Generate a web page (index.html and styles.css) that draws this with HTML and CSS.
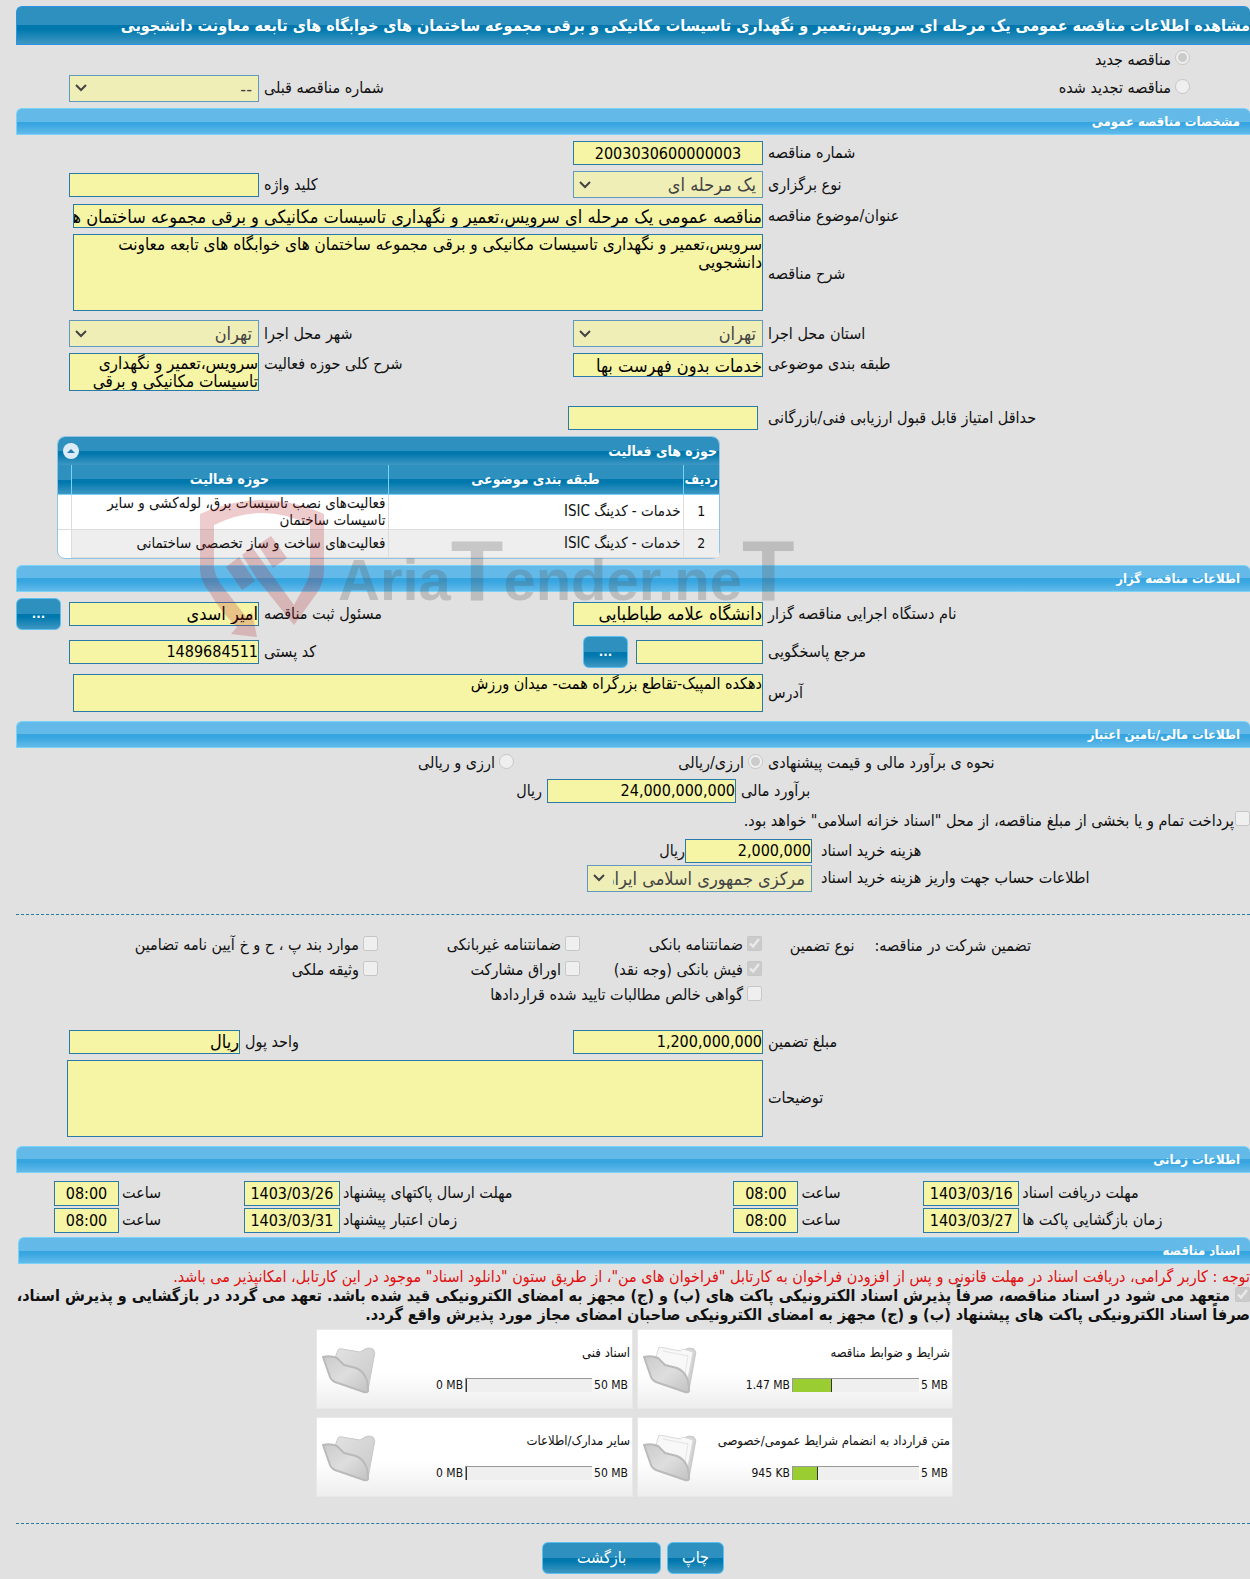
FILE: index.html
```html
<!DOCTYPE html>
<html lang="fa" dir="rtl">
<head>
  <meta charset="UTF-8" />
  <meta name="viewport" content="width=device-width, initial-scale=1">
  <title>مشاهده اطلاعات مناقصه عمومی</title>
  <link rel="stylesheet" href="styles.css">
</head>
<body>
  <h1 class="page-title">مشاهده اطلاعات مناقصه عمومی یک مرحله ای سرویس،تعمیر و نگهداری تاسیسات مکانیکی و برقی مجموعه ساختمان های خوابگاه های تابعه معاونت دانشجویی</h1>

  <div class="tender-kind">
    <div class="row">
      <label class="check"><input type="radio" name="kind" checked disabled>مناقصه جدید</label>
    </div>
    <div class="row">
      <label class="check"><input type="radio" name="kind" disabled>مناقصه تجدید شده</label>
      <label class="second" for="prev">شماره مناقصه قبلی</label>
      <select id="prev" disabled><option>--</option></select>
    </div>
  </div>

  <h2>مشخصات مناقصه عمومی</h2>
  <section class="form">
    <div class="row">
      <label for="number">شماره مناقصه</label>
      <input class="center" type="text" id="number" value="2003030600000003" readonly>
    </div>
    <div class="row">
      <label for="type">نوع برگزاری</label>
      <select id="type" disabled><option>یک مرحله ای</option></select>
      <label for="keyword">کلید واژه</label>
      <input type="text" id="keyword" readonly>
    </div>
    <div class="row">
      <label for="subject">عنوان/موضوع مناقصه</label>
      <input class="wide words" type="text" id="subject" value="مناقصه عمومی یک مرحله ای سرویس،تعمیر و نگهداری تاسیسات مکانیکی و برقی مجموعه ساختمان های خوابگاه های تابعه معاونت دانشجویی" readonly>
    </div>
    <div class="row">
      <label for="desc">شرح مناقصه</label>
      <textarea class="wide tall" id="desc" readonly>سرویس،تعمیر و نگهداری تاسیسات مکانیکی و برقی مجموعه ساختمان های خوابگاه های تابعه معاونت دانشجویی</textarea>
    </div>
    <div class="row">
      <label for="province">استان محل اجرا</label>
      <select id="province" disabled><option>تهران</option></select>
      <label for="city">شهر محل اجرا</label>
      <select id="city" disabled><option>تهران</option></select>
    </div>
    <div class="row top">
      <label for="category">طبقه بندی موضوعی</label>
      <input class="words" type="text" id="category" value="خدمات بدون فهرست بها" readonly>
      <label for="scope">شرح کلی حوزه فعالیت</label>
      <textarea id="scope" readonly>سرویس،تعمیر و نگهداری تاسیسات مکانیکی و برقی</textarea>
    </div>
    <div class="row score">
      <label for="score">حداقل امتیاز قابل قبول ارزیابی فنی/بازرگانی</label>
      <input type="text" id="score" readonly>
    </div>

    <div class="grid-box">
      <div class="grid-caption">
        <span>حوزه های فعالیت</span>
        <button type="button" class="toggle" aria-label="بستن">
          <svg viewBox="0 0 16 16" width="16" height="16"><circle cx="8" cy="8" r="8" fill="#dcebf8"/><path d="M4 10l4-4 4 4z" fill="#217bb0"/></svg>
        </button>
      </div>
      <table>
        <thead>
          <tr>
            <th class="col-num">ردیف</th>
            <th class="col-cat">طبقه بندی موضوعی</th>
            <th class="col-act">حوزه فعالیت</th>
            <th class="col-end"></th>
          </tr>
        </thead>
        <tbody>
          <tr>
            <td class="col-num">1</td>
            <td>خدمات - کدینگ ISIC</td>
            <td>فعالیت‌های نصب تاسیسات برق، لوله‌کشی و سایر تاسیسات ساختمان</td>
            <td class="col-end"></td>
          </tr>
          <tr>
            <td class="col-num">2</td>
            <td>خدمات - کدینگ ISIC</td>
            <td>فعالیت‌های ساخت و ساز تخصصی ساختمانی</td>
            <td class="col-end"></td>
          </tr>
        </tbody>
      </table>
      <svg class="watermark" viewBox="0 0 610 144" width="610" height="144" aria-hidden="true">
        <g fill="#b41c22" opacity=".22">
          <path d="M0 13Q62-15 124 13V69Q124 82 117 92L94 124 57 78 42 54 52 46 70 71 94 104 105 84Q110 76 110 66V24Q62 0 14 24V66Q15 76 23 86L47 117 52 111 57 136 31 133 37 126Q20 110 10 92Q0 80 0 69Z"/>
          <path d="M58 44L71 35 87 57 73 67Z"/>
          <path d="M26 66L39 56 55 80 42 89Z"/>
        </g>
        <text class="brand" x="138" y="99">Aria<tspan class="brand-cap">T</tspan>ender.ne<tspan class="brand-cap">T</tspan></text>
      </svg>
    </div>
  </section>

  <h2>اطلاعات مناقصه گزار</h2>
  <section class="form">
    <div class="row agency">
      <label for="agency">نام دستگاه اجرایی مناقصه گزار</label>
      <input class="words" type="text" id="agency" value="دانشگاه علامه طباطبایی" readonly>
      <label for="officer">مسئول ثبت مناقصه</label>
      <input class="words" type="text" id="officer" value="امیر اسدی" readonly>
      <button type="button" class="btn more">...</button>
    </div>
    <div class="row agency">
      <label for="contact">مرجع پاسخگویی</label>
      <div class="pick">
        <input type="text" id="contact" readonly>
        <button type="button" class="btn more">...</button>
      </div>
      <label for="postal">کد پستی</label>
      <input type="text" id="postal" value="1489684511" readonly>
    </div>
    <div class="row">
      <label for="address">آدرس</label>
      <textarea class="wide" id="address" readonly>دهکده المپیک-تقاطع بزرگراه همت- میدان ورزش</textarea>
    </div>
  </section>

  <h2 class="spaced">اطلاعات مالی/تامین اعتبار</h2>
  <section class="form">
    <div class="row">
      <span class="label">نحوه ی برآورد مالی و قیمت پیشنهادی</span>
      <label class="check"><input type="radio" name="currency" checked disabled>ارزی/ریالی</label>
      <label class="check currency-two"><input type="radio" name="currency" disabled>ارزی و ریالی</label>
    </div>
    <div class="line estimate">
      <label for="estimate">برآورد مالی</label>
      <input type="text" id="estimate" value="24,000,000,000" readonly>
      <span>ریال</span>
    </div>
    <div class="line treasury">
      <label class="check"><input type="checkbox" disabled>پرداخت تمام و یا بخشی از مبلغ مناقصه، از محل "اسناد خزانه اسلامی" خواهد بود.</label>
    </div>
    <div class="costs">
      <label for="cost">هزینه خرید اسناد</label>
      <div class="line">
        <input type="text" id="cost" value="2,000,000" readonly>
        <span>ریال</span>
      </div>
      <label for="account">اطلاعات حساب جهت واریز هزینه خرید اسناد</label>
      <select id="account" disabled><option>مرکزی جمهوری اسلامی ایران</option></select>
    </div>
    <hr>
    <div class="guarantee">
      <div class="guarantee-title">
        <span>تضمین شرکت در مناقصه:</span>
        <span>نوع تضمین</span>
      </div>
      <div class="guarantee-types">
        <label class="check"><input type="checkbox" checked disabled>ضمانتنامه بانکی</label>
        <label class="check"><input type="checkbox" disabled>ضمانتنامه غیربانکی</label>
        <label class="check"><input type="checkbox" disabled>موارد بند پ ، ح و خ آیین نامه تضامین</label>
        <label class="check"><input type="checkbox" checked disabled>فیش بانکی (وجه نقد)</label>
        <label class="check"><input type="checkbox" disabled>اوراق مشارکت</label>
        <label class="check"><input type="checkbox" disabled>وثیقه ملکی</label>
        <label class="check all"><input type="checkbox" disabled>گواهی خالص مطالبات تایید شده قراردادها</label>
      </div>
    </div>
    <div class="row">
      <label for="amount">مبلغ تضمین</label>
      <input type="text" id="amount" value="1,200,000,000" readonly>
      <div class="unit">
        <label for="unit">واحد پول</label>
        <input class="words" type="text" id="unit" value="ریال" readonly>
      </div>
    </div>
    <div class="row">
      <label for="notes">توضیحات</label>
      <textarea class="wide tall notes" id="notes" readonly></textarea>
    </div>
  </section>

  <h2 class="spaced">اطلاعات زمانی</h2>
  <section class="times">
    <label for="d1">مهلت دریافت اسناد</label>
    <input type="text" class="center" id="d1" value="1403/03/16" readonly>
    <label for="h1">ساعت</label>
    <input type="text" class="center" id="h1" value="08:00" readonly>
    <label for="d2">مهلت ارسال پاکتهای پیشنهاد</label>
    <input type="text" class="center" id="d2" value="1403/03/26" readonly>
    <label for="h2">ساعت</label>
    <input type="text" class="center" id="h2" value="08:00" readonly>

    <label for="d3">زمان بازگشایی پاکت ها</label>
    <input type="text" class="center" id="d3" value="1403/03/27" readonly>
    <label for="h3">ساعت</label>
    <input type="text" class="center" id="h3" value="08:00" readonly>
    <label for="d4">زمان اعتبار پیشنهاد</label>
    <input type="text" class="center" id="d4" value="1403/03/31" readonly>
    <label for="h4">ساعت</label>
    <input type="text" class="center" id="h4" value="08:00" readonly>
  </section>

  <h2 class="docs-title">اسناد مناقصه</h2>
  <section class="docs">
    <p class="notice">توجه : کاربر گرامی، دریافت اسناد در مهلت قانونی و پس از افزودن فراخوان به کارتابل "فراخوان های من"، از طریق ستون "دانلود اسناد" موجود در این کارتابل، امکانپذیر می باشد.</p>
    <label class="pledge"><input type="checkbox" checked disabled> متعهد می شود در اسناد مناقصه، صرفاً پذیرش اسناد الکترونیکی پاکت های (ب) و (ج) مجهز به امضای الکترونیکی قید شده باشد. تعهد می گردد در بازگشایی و پذیرش اسناد، صرفاً اسناد الکترونیکی پاکت های پیشنهاد (ب) و (ج) مجهز به امضای الکترونیکی صاحبان امضای مجاز مورد پذیرش واقع گردد.</label>

    <svg class="defs" width="0" height="0" aria-hidden="true">
      <defs>
        <linearGradient id="back" x1="0" y1="0" x2="1" y2="1">
          <stop offset="0" stop-color="#e2e2e2"/><stop offset="1" stop-color="#c8c8c8"/>
        </linearGradient>
        <linearGradient id="front" x1="0" y1="0" x2="1" y2="1">
          <stop offset="0" stop-color="#cacaca"/><stop offset=".5" stop-color="#dedede"/><stop offset="1" stop-color="#c2c2c2"/>
        </linearGradient>
        <symbol id="folder" viewBox="0 0 54 48">
          <path d="M13 12L16 4Q17 2 20 3L38 6 43 3Q47 1 51 3Q54 6 52 11L46 44Q45 47 42 46L14 34Z" fill="url(#back)" stroke="#c8c8c8"/>
          <path d="M1 11Q8 9 15 12L22 19 34 22Q41 25 44 32Q46 37 46 45Q45 47 42 46L13 36Q9 34 8 31Z" fill="url(#front)" stroke="#bababa" stroke-width="2" stroke-linejoin="round"/>
        </symbol>
        <symbol id="folder-full" viewBox="0 0 54 48">
          <path d="M13 12L16 4 38 6 43 3Q47 1 51 3Q54 6 52 11L46 44Q45 47 42 46L14 34Z" fill="url(#back)" stroke="#c8c8c8"/>
          <path d="M12 14L16 1 37 5 40 3 50 6 44 38 30 34Z" fill="#f8f8f8" stroke="#dadada"/>
          <path d="M20 5L45 10 41 34" fill="none" stroke="#e4e4e4"/>
          <path d="M1 11Q8 9 15 12L22 19 34 22Q41 25 44 32Q46 37 46 45Q45 47 42 46L13 36Q9 34 8 31Z" fill="url(#front)" stroke="#bababa" stroke-width="2" stroke-linejoin="round"/>
        </symbol>
      </defs>
    </svg>

    <div class="cards">
      <article class="card">
        <div class="card-body">
          <h3>شرایط و ضوابط مناقصه</h3>
          <div class="usage" dir="ltr"><span>1.47 MB</span><div class="bar"><div class="used" style="width: 30%"></div></div><span class="max">5 MB</span></div>
        </div>
        <svg class="folder"><use href="#folder-full"/></svg>
      </article>
      <article class="card">
        <div class="card-body">
          <h3>اسناد فنی</h3>
          <div class="usage" dir="ltr"><span>0 MB</span><div class="bar"><div class="used" style="width: 0%"></div></div><span class="max">50 MB</span></div>
        </div>
        <svg class="folder"><use href="#folder"/></svg>
      </article>
      <article class="card">
        <div class="card-body">
          <h3>متن قرارداد به انضمام شرایط عمومی/خصوصی</h3>
          <div class="usage" dir="ltr"><span>945 KB</span><div class="bar"><div class="used" style="width: 19%"></div></div><span class="max">5 MB</span></div>
        </div>
        <svg class="folder"><use href="#folder-full"/></svg>
      </article>
      <article class="card">
        <div class="card-body">
          <h3>سایر مدارک/اطلاعات</h3>
          <div class="usage" dir="ltr"><span>0 MB</span><div class="bar"><div class="used" style="width: 0%"></div></div><span class="max">50 MB</span></div>
        </div>
        <svg class="folder"><use href="#folder"/></svg>
      </article>
    </div>
  </section>

  <hr class="footer-line">
  <footer>
    <button type="button" class="btn">چاپ</button>
    <button type="button" class="btn back">بازگشت</button>
  </footer>
</body>
</html>
```
FILE: styles.css
```css
* {
  box-sizing: border-box;
}

body {
  margin: 0;
  padding: 6px 0 6px 16px;
  background-color: #e1e1e1;
  color: #111;
  font-family: 'DejaVu Sans Condensed', 'DejaVu Sans', sans-serif;
  font-size: 16px;
  line-height: 18px;
  overflow-x: hidden;
}

h1, h2, h3, p {
  margin: 0;
}

.page-title {
  height: 39px;
  padding-top: 1px;
  border: 1px solid #2a93e8;
  border-right: 0;
  border-radius: 6px 6px 0 0;
  background: linear-gradient(#2e90bf 0, #2e90bf 50%, #0078ae 50%, #0078ae 60%, #3f97c2);
  color: #fff;
  font-size: 16px;
  line-height: 36px;
  white-space: nowrap;
}

h2 {
  height: 27px;
  margin: 6px 0;
  padding-right: 10px;
  border: 1px solid #79d3f8;
  border-right: 0;
  border-radius: 6px 6px 0 0;
  background: linear-gradient(#63bae9 0, #63bae9 50%, #36a5e0 50%, #36a5e0 60%, #63bae9);
  color: #fff;
  font-size: 13px;
  line-height: 25px;
}

h2.spaced {
  margin-top: 9px;
}

/* form rows: label, field, label, field, button */
.form {
  display: flex;
  flex-direction: column;
  gap: 6px;
}

.row {
  display: grid;
  grid-template-columns: 482fr 190px 304fr 190px 48px;
  column-gap: 5px;
  align-items: center;
}

.row > label:not(.check), .row > .label {
  text-align: left;
}

.row.top {
  align-items: start;
  margin-bottom: 9px;
}

.row.top label {
  padding-top: 2px;
}

input[type="text"], textarea, select {
  display: block;
  width: 100%;
  margin: 0;
  padding: 0;
  border: 1px solid #2a7aa9;
  border-radius: 0;
  background-color: #f6f4a5;
  color: #000;
  font-family: inherit;
  font-size: 16px;
}

input[type="text"] {
  height: 24px;
}

input.words {
  font-size: 18px;
}

textarea {
  height: 38px;
  font-size: 17px;
  line-height: 18px;
  resize: none;
  overflow: hidden;
}

textarea#address {
  font-size: 16px;
}

select {
  height: 27px;
  padding: 0 6px 0 25px;
  border-color: #6099bb;
  background: #efeeb7 url("data:image/svg+xml,%3Csvg xmlns='http://www.w3.org/2000/svg' width='12' height='8'%3E%3Cpath d='M1 1l5 5 5-5' fill='none' stroke='%23444' stroke-width='2'/%3E%3C/svg%3E") no-repeat 5px center;
  color: #444;
  font-size: 18px;
  opacity: 1;
  appearance: none;
}

.center {
  text-align: center;
}

.wide {
  grid-column: 2 / 5;
  justify-self: start;
}

input.wide, textarea.wide {
  width: calc(100% - 4px);
}

textarea.tall {
  height: 77px;
}

textarea.notes {
  width: calc(100% + 2px);
}

.tall:not(.notes) {
  margin-bottom: 3px;
}

.score input {
  position: relative;
  left: -5px;
}

.check {
  display: flex;
  align-items: center;
  gap: 4px;
  white-space: nowrap;
}

input[type="radio"], input[type="checkbox"] {
  flex: none;
  width: 15px;
  height: 15px;
  margin: 0 0 4px;
}

/* new / renewed tender */
.tender-kind .row {
  height: 29px;
}

.tender-kind .row + .row {
  height: 28px;
}

.tender-kind .check {
  padding-right: 60px;
}

.tender-kind .second {
  grid-column: 3;
}

/* activity table */
.grid-box {
  position: relative;
  width: 663px;
  margin-right: auto;
  margin-left: 41px;
  border: 1px solid #8fc4e4;
  border-radius: 8px;
  background-color: #fff;
  font-size: 15px;
}

.grid-caption {
  display: flex;
  align-items: center;
  justify-content: space-between;
  height: 28px;
  padding: 0 2px 0 5px;
  border-radius: 7px 7px 0 0;
  background: linear-gradient(#2e90bf 0, #2e90bf 50%, #0078ae 50%, #0078ae 60%, #3f97c2);
  color: #fff;
  font-size: 14px;
  font-weight: bold;
}

.toggle {
  display: block;
  width: 16px;
  height: 16px;
  padding: 0;
  border: 0;
  background: none;
}

.toggle svg {
  display: block;
}

table {
  width: 100%;
  border-collapse: collapse;
  table-layout: fixed;
}

th {
  height: 29px;
  padding: 0;
  border-left: 1px solid #79d3f8;
  border-bottom: 1px solid #79d3f8;
  background: linear-gradient(#2e90bf 0, #2e90bf 50%, #0078ae 50%, #0078ae 60%, #3f97c2);
  color: #fff;
  font-size: 14px;
}

td {
  height: 28px;
  padding: 0 2px;
  border-left: 1px solid #ddd;
  border-bottom: 1px solid #ddd;
  line-height: 17px;
}

tbody tr:nth-child(even) td {
  background-color: #eee;
}

.col-num {
  width: 36px;
  text-align: center;
}

.col-cat {
  width: 295px;
}

th.col-end, td.col-end {
  width: 13px;
  border-left: 0;
}

tbody td.col-num, tbody tr td.col-end {
  background-color: #fff;
}

tbody td.col-num {
  font-size: 14px;
}

tbody tr:last-child td.col-end {
  border-bottom: 0;
  border-radius: 0 0 0 8px;
}

.watermark {
  position: absolute;
  top: 64px;
  left: 142px;
  overflow: visible;
  direction: ltr;
  pointer-events: none;
}

.brand {
  fill: #555;
  fill-opacity: .25;
  font-family: 'Liberation Sans', sans-serif;
  font-size: 58px;
  font-weight: bold;
}

.brand-cap {
  font-size: 86px;
}

/* tender owner */
.agency {
  min-height: 32px;
}

.pick {
  display: flex;
  align-items: center;
  gap: 8px;
}

.pick input[type="text"] {
  width: 127px;
}

.btn {
  height: 32px;
  padding: 0 14px;
  border: 1px solid #5cc0ef;
  border-radius: 6px;
  background: linear-gradient(#2e90bf 0, #2e90bf 50%, #0078ae 50%, #0078ae 60%, #3f97c2);
  color: #fff;
  font-family: inherit;
  font-size: 16px;
}

.btn.more {
  flex: none;
  justify-self: end;
  width: 45px;
  padding: 0;
  font-size: 13px;
  font-weight: bold;
}

/* finance */
.currency-two {
  padding-right: 54px;
}

.line {
  display: flex;
  align-items: center;
}

.estimate {
  gap: 5px;
}

.estimate label {
  width: 509px;
  text-align: left;
}

.estimate input[type="text"] {
  width: 189px;
}

.treasury {
  min-height: 24px;
}

.treasury .check {
  gap: 1px;
}

.costs {
  display: grid;
  grid-template-columns: 429px 225px;
  column-gap: 9px;
  row-gap: 2px;
  align-items: center;
}

.costs > label {
  text-align: left;
}

.costs input[type="text"] {
  width: 127px;
}

hr {
  width: 100%;
  margin: 16px 0 12px;
  border: 0;
  border-top: 1px dashed #2a7aa9;
}

.guarantee {
  display: flex;
  gap: 25px;
  padding-right: 219px;
  margin-bottom: 16px;
}

.guarantee-title {
  display: flex;
  gap: 20px;
  width: 244px;
  line-height: 25px;
  white-space: nowrap;
}

.guarantee-types {
  display: grid;
  grid-template-columns: 182px 202px auto;
  grid-auto-rows: 25px;
}

.all {
  grid-column: 1 / 4;
}

.unit {
  display: flex;
  grid-column: 3 / 5;
  align-items: center;
  gap: 5px;
}

.unit label {
  flex: 1;
  text-align: left;
}

.unit input[type="text"] {
  width: 171px;
}

/* schedule */
.times {
  display: grid;
  grid-template-columns: 228fr 96px 119fr 65px 388fr 96px 119fr 65px;
  gap: 2px 3px;
  align-items: center;
  padding: 2px 0 0 38px;
}

.times label {
  text-align: left;
}

.times input[type="text"] {
  height: 25px;
}

h2.docs-title {
  margin: 4px 0 4px 2px;
}

/* documents */
.notice {
  color: #e01010;
  white-space: nowrap;
}

.pledge {
  display: block;
  padding-top: 1px;
  font-weight: bold;
}

.pledge input[type="checkbox"] {
  vertical-align: middle;
}

.defs {
  display: block;
}

.cards {
  display: grid;
  grid-template-columns: 316px 317px;
  gap: 8px 4px;
  margin: 5px 297px 0 0;
}

.card {
  display: flex;
  justify-content: space-between;
  height: 80px;
  padding: 14px 2px 0 5px;
  border: 1px solid #e8e8e8;
  background: linear-gradient(#fff 55%, #eee);
  font-size: 12px;
}

.card-body {
  display: flex;
  flex-direction: column;
  gap: 14px;
  white-space: nowrap;
}

.card h3 {
  font-size: 13px;
  font-weight: normal;
}

.usage {
  display: flex;
  align-items: center;
  justify-content: flex-end;
  gap: 2px;
}

.max {
  padding-right: 2px;
}

.bar {
  width: 127px;
  height: 14px;
  border-top: 1px solid #999;
  border-left: 1px solid #999;
  background-color: #efefef;
}

.used {
  box-sizing: content-box;
  height: 13px;
  border-right: 1px solid #333;
  background-color: #9acd32;
}

.folder {
  width: 54px;
  height: 48px;
  margin-top: 2px;
}

hr.footer-line {
  margin: 26px 0 18px;
}

footer {
  display: flex;
  justify-content: center;
  gap: 6px;
}

.btn.back {
  width: 119px;
}
```
